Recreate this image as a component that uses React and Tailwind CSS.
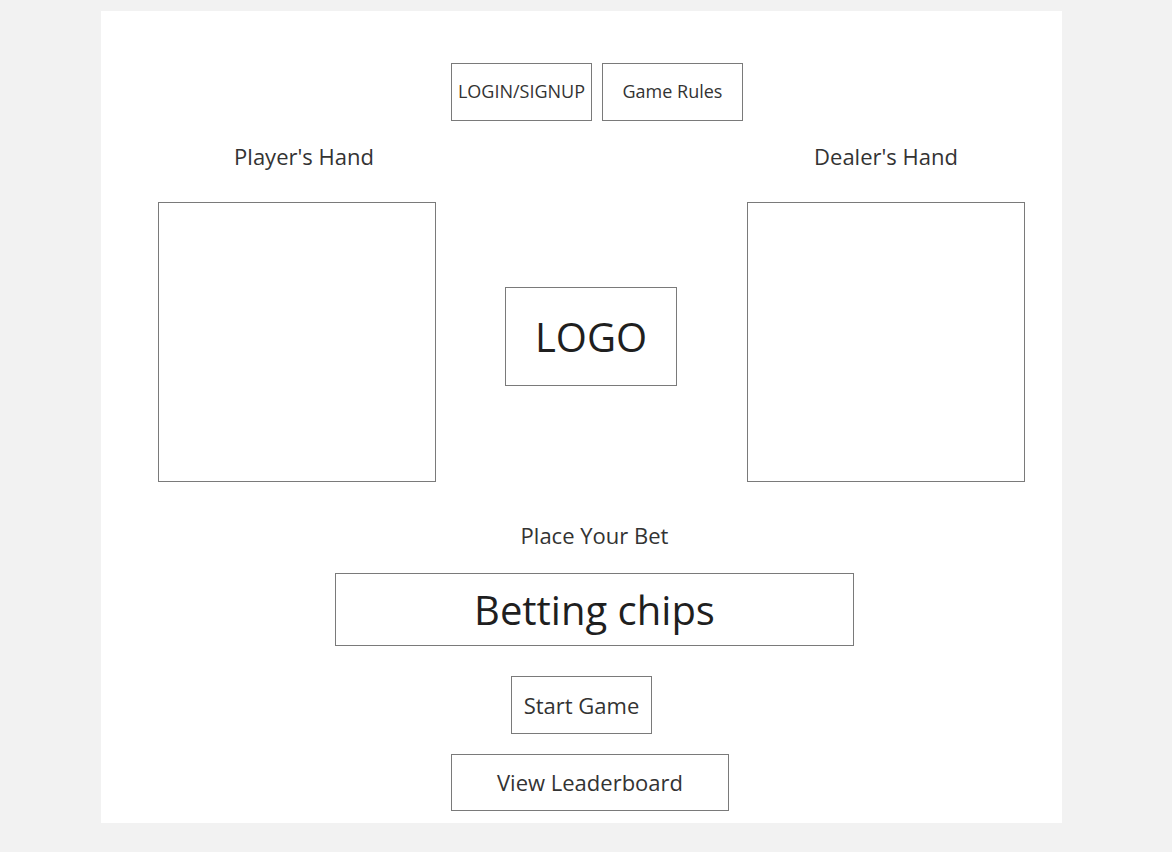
export default function App() {
  const box = "border border-[#7a7a7a] bg-white";
  return (
    <div className="min-h-[852px] w-[1172px] bg-[#f2f2f2] pt-[11px] pl-[101px]" style={{ fontFamily: '"Open Sans", sans-serif' }}>
      <div className="w-[961px] h-[812px] bg-white flex flex-col text-[#333]">
        <div className="flex pl-[350px] pt-[52px] gap-[10px]">
          <div className={`${box} w-[141px] h-[58px] flex items-center justify-center text-[18px] pb-[2px]`}>LOGIN/SIGNUP</div>
          <div className={`${box} w-[141px] h-[58px] flex items-center justify-center text-[18px] pb-[2px]`}>Game Rules</div>
        </div>
        <div className="flex pl-[57px] mt-[21px] h-[28px] items-center text-[22px]">
          <div className="w-[292px] text-center">Player's Hand</div>
          <div className="ml-[297px] w-[278px] text-center">Dealer's Hand</div>
        </div>
        <div className="flex pl-[57px] mt-[32px]">
          <div className={`${box} w-[278px] h-[280px]`}></div>
          <div className={`${box} ml-[69px] mt-[85px] w-[172px] h-[99px] flex items-center justify-center text-[40px] text-[#1f1f1f]`}>LOGO</div>
          <div className={`${box} ml-[70px] w-[278px] h-[280px]`}></div>
        </div>
        <div className="pl-[234px] mt-[39px]">
          <div className="w-[519px] h-[28px] flex items-center justify-center text-[22px]">Place Your Bet</div>
          <div className={`${box} mt-[24px] w-[519px] h-[73px] flex items-center justify-center text-[40px] text-[#1f1f1f]`}>Betting chips</div>
        </div>
        <div className="pl-[410px] mt-[30px]">
          <div className={`${box} w-[141px] h-[58px] flex items-center justify-center text-[22px]`}>Start Game</div>
        </div>
        <div className="pl-[350px] mt-[20px]">
          <div className={`${box} w-[278px] h-[57px] flex items-center justify-center text-[22px]`}>View Leaderboard</div>
        </div>
      </div>
    </div>
  );
}
